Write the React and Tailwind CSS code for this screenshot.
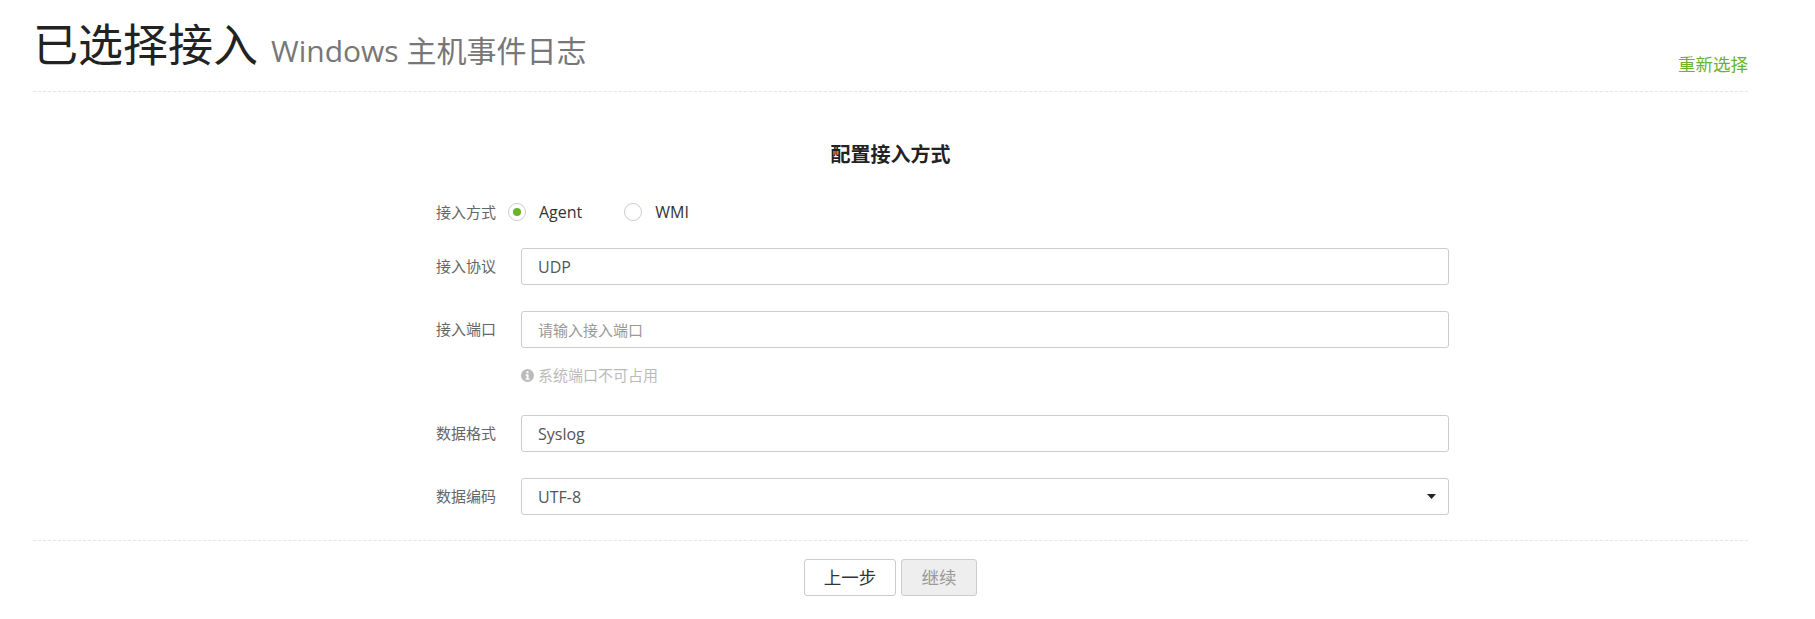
import React from 'react';

const fieldClass = 'w-[928px] h-[37px] px-4 border border-[#ccc] rounded-[3px] bg-white text-base text-[#555] outline-none placeholder:text-[#999] placeholder:text-[15px]';

function Row({ label, className = '', children }) {
  return (
    <div className={`flex items-center ${className}`}>
      <span className="w-[85px] shrink-0 text-[15px] text-[#666]">{label}</span>
      {children}
    </div>
  );
}

function Radio({ label, checked, className = '' }) {
  return (
    <label className={`flex items-center ${className}`}>
      <span className="w-[18px] h-[18px] flex items-center justify-center rounded-full border border-[#ccc] bg-white">
        {checked && <span className="w-2 h-2 rounded-full bg-[#6ab42c]" />}
      </span>
      <span className="ml-[13px] text-base text-[#333]">{label}</span>
    </label>
  );
}

export default function App() {
  return (
    <div className="min-h-screen bg-white pl-[33px] pr-[67px] font-['Open_Sans','Noto_Sans_CJK_SC',sans-serif]">
      <header className="flex items-end justify-between h-[92px] pb-[14px] border-b border-dashed border-[#e5e5e5]">
        <div className="flex items-baseline mb-[2px]">
          <h1 className="text-[45px] leading-[60px] font-normal text-[#222]">已选择接入</h1>
          <span className="ml-[13px] text-[30px] font-normal text-[#777]">Windows 主机事件日志</span>
        </div>
        <a className="text-[17.5px] text-[#6ab42c]">重新选择</a>
      </header>

      <section className="flex flex-col">
        <h2 className="mt-[50px] text-center text-xl font-bold leading-[26px] text-[#222]">配置接入方式</h2>
        <form className="ml-[403px] mt-[32px] flex flex-col">
          <Row label="接入方式" className="h-[24px]">
            <div className="flex -ml-[13px]">
              <Radio label="Agent" checked />
              <Radio label="WMI" className="ml-[42px]" />
            </div>
          </Row>
          <Row label="接入协议" className="mt-[24px]">
            <input className={fieldClass} value="UDP" readOnly />
          </Row>
          <Row label="接入端口" className="mt-[26px]">
            <input className={fieldClass} placeholder="请输入接入端口" readOnly />
          </Row>
          <div className="ml-[85px] mt-[16px] flex items-center gap-[4px] text-[15px] leading-[22px] text-[#bbb]">
            <svg width="13" height="13" viewBox="0 0 13 13">
              <circle cx="6.5" cy="6.5" r="6.5" fill="#bbb" />
              <rect x="5.5" y="2.2" width="2" height="2" fill="#fff" />
              <path d="M4.6 5.2h2.9v4.4h1v1.2H4.6V9.6h1V6.4h-1z" fill="#fff" />
            </svg>
            <span>系统端口不可占用</span>
          </div>
          <Row label="数据格式" className="mt-[29px]">
            <input className={fieldClass} value="Syslog" readOnly />
          </Row>
          <Row label="数据编码" className="mt-[26px]">
            <div className={`${fieldClass} flex items-center justify-between pr-[12px]`}>
              <span>UTF-8</span>
              <svg width="9" height="5" viewBox="0 0 9 5">
                <path d="M0 0h9L4.5 5z" fill="#222" />
              </svg>
            </div>
          </Row>
        </form>
      </section>

      <footer className="mt-[25px] pt-[18px] border-t border-dashed border-[#e5e5e5] flex justify-center gap-[5px]">
        <button className="w-[92px] h-[37px] border border-[#ccc] rounded-[3px] bg-white text-[17.5px] text-[#333]">上一步</button>
        <button className="w-[76px] h-[37px] border border-[#ccc] rounded-[3px] bg-[#eee] text-[17.5px] text-[#999]" disabled>继续</button>
      </footer>
    </div>
  );
}
